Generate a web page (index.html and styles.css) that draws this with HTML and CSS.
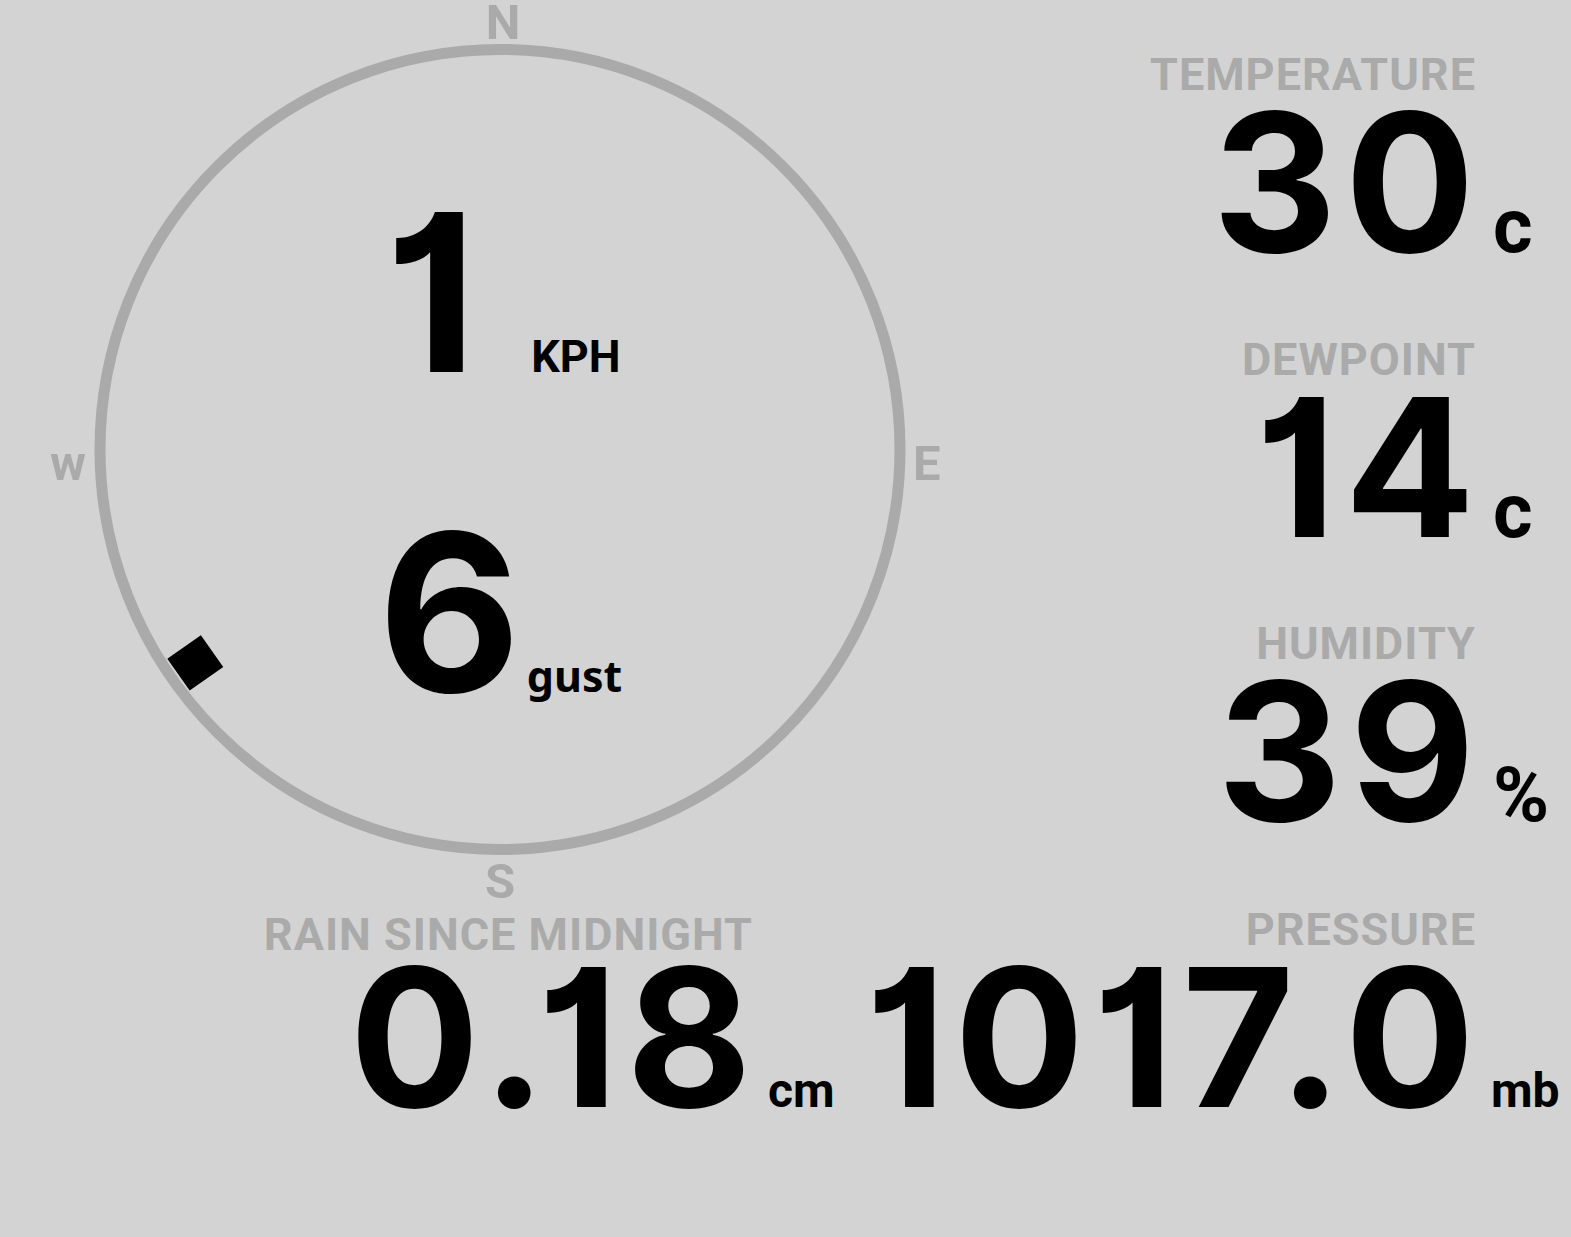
FILE: index.html
```html
<!DOCTYPE html>
<html lang="en">
<head>
    <meta charset="UTF-8">
    <meta name="viewport" content="width=device-width, initial-scale=1.0">
    <title>Weather Station</title>
    <link rel="stylesheet" href="styles.css">
</head>
<body>

<main class="station">

    <!-- Wind compass and current readings -->
    <section class="top">
        <div class="wind">
            <svg class="compass" width="1000" height="904" viewBox="0 0 1000 904">
                <circle class="ring" cx="500" cy="449.5" r="400"/>
                <text class="point" x="503" y="39" text-anchor="middle">N</text>
                <text class="point" x="913" y="480">E</text>
                <text class="point" x="500" y="898" text-anchor="middle">S</text>
                <text class="point" x="50" y="480">w</text>
                <!-- wind direction marker, 235 degrees -->
                <g transform="translate(500 449.5) rotate(235)">
                    <rect class="needle" x="-19.5" y="-392.5" width="39" height="41"/>
                </g>
            </svg>
            <div class="speed">
                <div class="speed-line">
                    <span class="speed-num">1</span>
                    <span class="speed-unit">KPH</span>
                </div>
                <div class="speed-line gust-line">
                    <span class="speed-num">6</span>
                    <span class="speed-unit gust">gust</span>
                </div>
            </div>
        </div>

        <div class="readings">
            <div class="reading">
                <div class="label">TEMPERATURE</div>
                <div class="value">30</div>
                <div class="unit">c</div>
            </div>
            <div class="reading">
                <div class="label">DEWPOINT</div>
                <div class="value">14</div>
                <div class="unit">c</div>
            </div>
            <div class="reading">
                <div class="label">HUMIDITY</div>
                <div class="value">39</div>
                <div class="unit">%</div>
            </div>
        </div>
    </section>

    <!-- Rain and pressure -->
    <section class="bottom">
        <div class="reading rain">
            <div class="label">RAIN SINCE MIDNIGHT</div>
            <div class="value">0.18</div>
            <div class="unit small">cm</div>
        </div>
        <div class="reading">
            <div class="label">PRESSURE</div>
            <div class="value">1017.0</div>
            <div class="unit small">mb</div>
        </div>
    </section>

</main>

</body>
</html>
```

FILE: styles.css
```css
body {
    margin: 0;
    padding: 0;
    background-color: #d3d3d3;
    font-family: 'Roboto', 'Liberation Sans', sans-serif;
    color: #000;
}

.station {
    width: 1571px;
    height: 1237px;
    overflow: hidden;
}

/* Top half: compass on the left, readings on the right */
.top {
    display: grid;
    grid-template-columns: 1000px 1fr;
}

.wind {
    display: grid;
}

.wind > * {
    grid-area: 1 / 1;
}

.compass {
    display: block;
    overflow: visible;
}

.ring {
    fill: none;
    stroke: #aaa;
    stroke-width: 11;
}

.point {
    font-family: 'Roboto', sans-serif;
    font-weight: 700;
    font-size: 49px;
    fill: #aaa;
}

.needle {
    fill: #000;
}

/* Wind speed overlay */
.speed {
    padding-top: 202px;
    display: flex;
    flex-direction: column;
    gap: 140px;
}

.speed-line {
    display: flex;
    align-items: baseline;
    justify-content: center;
    padding-left: 5px;
}

.speed-line.gust-line {
    padding-left: 0;
}

.speed-num {
    font-family: 'Inter', sans-serif;
    font-weight: 700;
    font-size: 220px;
    line-height: 180px;
    font-feature-settings: "cv01" 1;
}

.speed-unit {
    font-weight: 700;
    font-size: 45px;
    line-height: 1;
    margin-left: 54px;
}

.speed-unit.gust {
    font-family: 'Noto Sans', sans-serif;
    font-size: 43px;
    margin-left: 6px;
}

/* Readings */
.readings {
    padding-top: 52px;
    display: flex;
    flex-direction: column;
    gap: 79.5px;
}

.reading {
    display: grid;
    grid-template-columns: minmax(0, 1fr) 96px;
    grid-template-rows: 45px 150px;
    row-gap: 10px;
    align-items: baseline;
}

.label {
    grid-column: 1;
    grid-row: 1;
    text-align: right;
    white-space: nowrap;
    font-weight: 700;
    font-size: 45px;
    line-height: 45px;
    letter-spacing: 1px;
    margin-right: -1px;
    color: #aaa;
}

.value {
    grid-column: 1;
    grid-row: 2;
    display: flex;
    justify-content: flex-end;
    white-space: nowrap;
    font-family: 'Inter', sans-serif;
    font-weight: 700;
    font-size: 193px;
    line-height: 150px;
    letter-spacing: 8px;
    margin-right: -8px;
    font-feature-settings: "cv01" 1;
}

.unit {
    grid-column: 2;
    grid-row: 2;
    padding-left: 18px;
    font-weight: 700;
    font-size: 76px;
    line-height: 1;
}

.unit.small {
    font-size: 48px;
    padding-left: 16px;
}

/* Bottom row */
.bottom {
    display: grid;
    grid-template-columns: 848px 1fr;
    margin-top: 3px;
}

.rain {
    grid-template-rows: 50px 150px;
    row-gap: 5px;
}

.rain .label {
    padding-top: 5px;
    line-height: 45px;
}
```
